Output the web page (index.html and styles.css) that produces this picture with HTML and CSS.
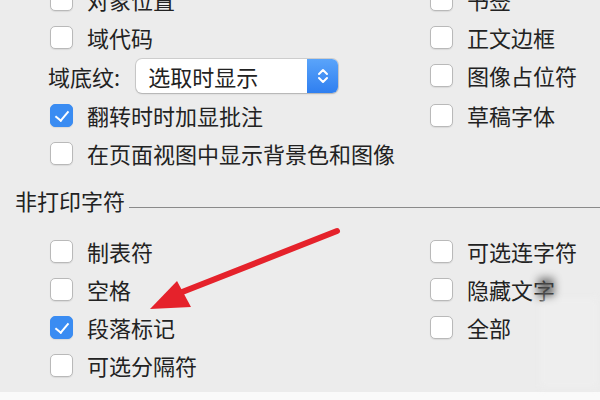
FILE: index.html
```html
<!DOCTYPE html>
<html lang="zh-CN">
<head>
    <meta charset="UTF-8">
    <title>显示选项</title>
    <link rel="stylesheet" href="styles.css">
</head>
<body>
    <div class="panel">
        <div class="options">
            <label class="row"><span class="box"></span>对象位置</label>
            <label class="row"><span class="box"></span>书签</label>

            <label class="row"><span class="box"></span>域代码</label>
            <label class="row"><span class="box"></span>正文边框</label>

            <div class="row row-select">
                <span class="select-label">域底纹:</span>
                <div class="select">
                    <span class="select-value">选取时显示</span>
                    <span class="stepper">
                        <svg width="14" height="20" viewBox="0 0 14 20">
                            <path d="M3 8 L7 4 L11 8 M3 12 L7 16 L11 12" fill="none" stroke="#fff" stroke-width="2" stroke-linecap="round" stroke-linejoin="round"/>
                        </svg>
                    </span>
                </div>
            </div>
            <label class="row"><span class="box"></span>图像占位符</label>

            <label class="row"><span class="box checked"></span>翻转时时加显批注</label>
            <label class="row"><span class="box"></span>草稿字体</label>

            <label class="row span-2"><span class="box"></span>在页面视图中显示背景色和图像</label>
        </div>

        <div class="section-title">
            <span>非打印字符</span>
            <div class="rule"></div>
        </div>

        <div class="options options-bottom">
            <label class="row"><span class="box"></span>制表符</label>
            <label class="row"><span class="box"></span>可选连字符</label>

            <label class="row"><span class="box"></span>空格</label>
            <label class="row"><span class="box"></span>隐藏文字</label>

            <label class="row"><span class="box checked"></span>段落标记</label>
            <label class="row"><span class="box"></span>全部</label>

            <label class="row"><span class="box"></span>可选分隔符</label>
        </div>
    </div>
    <div class="footer-strip"></div>

    <!-- annotation arrow drawn over the dialog -->
    <svg class="arrow" width="600" height="400" viewBox="0 0 600 400">
        <line x1="337" y1="231" x2="172" y2="296" stroke="#e5222b" stroke-width="6" stroke-linecap="round"/>
        <polygon points="150,309 177,281 191,307" fill="#e5222b"/>
    </svg>

    <!-- faded watermark -->
    <div class="smudge"></div>
    <div class="watermark"></div>
</body>
</html>
```

FILE: styles.css
```css
* {
    margin: 0;
    padding: 0;
    box-sizing: border-box;
}

body {
    width: 600px;
    height: 400px;
    overflow: hidden;
    position: relative;
    background: #ececec;
    font-family: "Noto Sans CJK SC", "Noto Sans", sans-serif;
    font-size: 22px;
    color: #222;
}

.panel {
    height: 392px;
    overflow: hidden;
}

.options {
    display: grid;
    grid-template-columns: 380px 1fr;
    margin-top: -20px;
    padding-left: 50px;
}

.options-bottom {
    margin-top: 17px;
}

.row {
    display: flex;
    align-items: center;
    height: 38px;
    white-space: nowrap;
}

.row-select {
    height: 40px;
}

.span-2 {
    grid-column: 1 / 3;
}

.box {
    width: 23px;
    height: 23px;
    border-radius: 5px;
    background: #fff;
    border: 1px solid #b9b9b9;
    box-shadow: 0 1px 1px rgba(0, 0, 0, 0.08);
    margin-right: 14px;
    flex-shrink: 0;
    position: relative;
}

.box.checked {
    background: #3a8cf2;
    border-color: #3a8cf2;
}

.box.checked::after {
    content: "";
    position: absolute;
    left: 7px;
    top: 3px;
    width: 6px;
    height: 11px;
    border-right: 2.5px solid #fff;
    border-bottom: 2.5px solid #fff;
    transform: rotate(40deg);
}

.select-label {
    margin-left: -2px;
    margin-right: 16px;
}

.select {
    display: flex;
    align-items: center;
    width: 202px;
    height: 34px;
    background: #fff;
    border-radius: 6px;
    box-shadow: 0 0 0 1px rgba(0, 0, 0, 0.12), 0 1px 2px rgba(0, 0, 0, 0.15);
    overflow: hidden;
}

.select-value {
    flex: 1;
    padding-left: 12px;
}

.stepper {
    width: 31px;
    height: 100%;
    display: flex;
    align-items: center;
    justify-content: center;
    background: linear-gradient(#5aa4fa, #2f7ff0);
}

.section-title {
    display: flex;
    align-items: flex-end;
    height: 30px;
    margin-top: 13px;
    padding-left: 15px;
}

.section-title span {
    line-height: 30px;
    margin-right: 4px;
}

.rule {
    flex: 1;
    border-top: 1.5px solid #8a8a8a;
    margin-bottom: 7px;
}

.footer-strip {
    height: 8px;
    background: #fafafa;
}

.arrow {
    position: absolute;
    left: 0;
    top: 0;
    pointer-events: none;
}

.smudge {
    position: absolute;
    left: 538px;
    top: 278px;
    width: 16px;
    height: 20px;
    background: #555;
    filter: blur(4px);
    opacity: 0.8;
}

.watermark {
    position: absolute;
    left: 540px;
    top: 298px;
    width: 58px;
    height: 90px;
    background: rgba(240, 240, 240, 0.6);
    filter: blur(3px);
}
```
